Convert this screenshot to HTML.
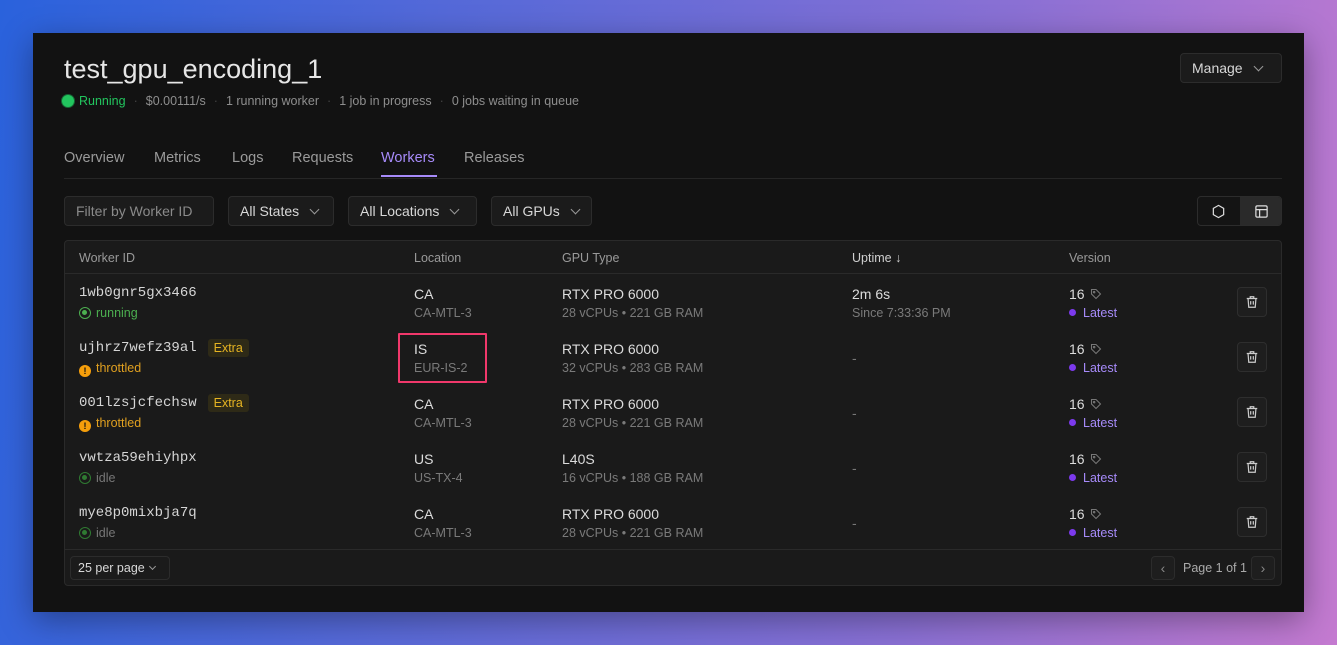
<!DOCTYPE html>
<html><head><meta charset="utf-8"><style>
*{box-sizing:border-box;margin:0;padding:0}
body{width:1337px;height:645px;overflow:hidden;background:linear-gradient(100deg,#2a62dc 0%,#5a6ad8 35%,#8a70d4 70%,#c47ad0 100%);font-family:"Liberation Sans",sans-serif;position:relative}
.panel{position:absolute;left:33px;top:33px;width:1271px;height:579px;background:#121212;box-shadow:0 8px 30px rgba(0,0,0,.35)}
.abs{position:absolute}
h1{position:absolute;left:31px;top:21px;font-size:27px;font-weight:400;color:#e6e6e6}
.meta{position:absolute;left:29px;top:61px;font-size:12.5px;color:#8e8e8e;display:flex;align-items:center;white-space:nowrap}
.meta .sep{color:#444;margin:0 8px}
.dot{width:12px;height:12px;border-radius:50%;background:#22c55e;display:inline-block;margin-right:5px;box-shadow:0 0 0 1px #166534}
.btn{position:absolute;border:1px solid #2c2c2c;background:#1b1b1b;border-radius:4px;color:#d8d8d8;font-size:14px;display:flex;align-items:center;padding-left:11px}
.chev{width:7px;height:7px;border-right:1.3px solid #999;border-bottom:1.3px solid #999;transform:rotate(45deg);margin-left:12px;margin-top:-4px}
.tabs{position:absolute;left:31px;top:117px;font-size:14.5px;color:#9a9a9a}
.tabs span{position:absolute;white-space:nowrap}
.tline{position:absolute;left:31px;top:145px;width:1218px;height:1px;background:#262626}
.table{position:absolute;left:31px;top:207px;width:1218px;height:346px;background:#1a1a1a;border:1px solid #2a2a2a;border-radius:4px}
.hd{position:absolute;top:0;height:33px;left:0;right:0;border-bottom:1px solid #2a2a2a;font-size:12.5px;color:#9a9a9a}
.hd span{position:absolute;top:10px}
.row{position:absolute;left:0;right:0;height:55px}
.c{position:absolute;white-space:nowrap}
.t1{top:11px;font-size:14px;color:#dcdcdc}
.t2{top:31px;font-size:12.5px;color:#7a7a7a}
.mono{font-family:"Liberation Mono",monospace;font-size:14px;color:#d6d6d6;display:flex;align-items:center;height:18px;top:9px}
.extra{display:inline-block;background:#2e2a17;color:#e6b422;font-family:"Liberation Sans",sans-serif;font-size:12.5px;padding:2px 6px;border-radius:3px;margin-left:11px}
.del{position:absolute;right:14px;top:12px;width:30px;height:30px;border:1px solid #2e2e2e;background:#1e1e1e;border-radius:4px;display:flex;align-items:center;justify-content:center}
.lat{color:#a78bfa}
.lat:before{content:"";display:inline-block;width:7px;height:7px;border-radius:50%;background:#7c3aed;margin-right:7px;vertical-align:1px}
.ft{position:absolute;left:0;right:0;top:308px;border-top:1px solid #2a2a2a;height:37px}
.tag{vertical-align:-1px;margin-left:2px}
</style></head><body>
<div class="panel">
<h1>test_gpu_encoding_1</h1>
<div class="meta"><span class="dot"></span><span style="color:#22c55e">Running</span><span class="sep">·</span>$0.00111/s<span class="sep">·</span>1 running worker<span class="sep">·</span>1 job in progress<span class="sep">·</span>0 jobs waiting in queue</div>
<div class="btn" style="left:1147px;top:20px;width:102px;height:30px">Manage<span class="chev"></span></div>
<div class="tabs"><span style="left:0">Overview</span><span style="left:90px">Metrics</span><span style="left:168px">Logs</span><span style="left:228px">Requests</span><span style="left:317px;color:#a78bfa">Workers</span><span style="left:400px">Releases</span></div>
<div class="abs" style="left:348px;top:142px;width:56px;height:2px;background:#a78bfa"></div>
<div class="tline"></div>
<div class="btn" style="left:31px;top:163px;width:150px;height:30px;color:#8a8a8a">Filter by Worker ID</div>
<div class="btn" style="left:195px;top:163px;width:106px;height:30px">All States<span class="chev"></span></div>
<div class="btn" style="left:315px;top:163px;width:129px;height:30px">All Locations<span class="chev"></span></div>
<div class="btn" style="left:458px;top:163px;width:101px;height:30px">All GPUs<span class="chev"></span></div>
<div class="abs" style="left:1164px;top:163px;width:85px;height:30px;border:1px solid #2c2c2c;border-radius:4px;background:#141414;overflow:hidden">
<div class="abs" style="left:42px;top:0;width:43px;height:30px;background:#2a2a2a"></div>
<svg class="abs" style="left:13px;top:7px" width="15" height="15" viewBox="0 0 16 16" fill="none" stroke="#ddd" stroke-width="1.3"><path d="M8 1.5l5.5 3.2v6.6L8 14.5l-5.5-3.2V4.7z"/></svg>
<svg class="abs" style="left:56px;top:7px" width="15" height="15" viewBox="0 0 16 16" fill="none" stroke="#ddd" stroke-width="1.3"><rect x="2" y="2" width="12" height="12" rx="1.5"/><path d="M2 6h12M6 6v8"/></svg>
</div>
<div class="table">
<div class="hd"><span style="left:14px">Worker ID</span><span style="left:349px">Location</span><span style="left:497px">GPU Type</span><span style="left:787px;color:#cfcfcf">Uptime ↓</span><span style="left:1004px">Version</span></div>
<div class="row" style="top:34px">
<div class="c mono" style="left:14px">1wb0gnr5gx3466</div>
<div class="c t2" style="left:14px;color:#4caf50"><span style="display:inline-block;width:12px;height:12px;border:1.5px solid #4caf50;border-radius:50%;vertical-align:-2px;margin-right:5px;position:relative"><span style="position:absolute;left:2px;top:2px;width:5px;height:5px;border-radius:50%;background:#4caf50"></span></span>running</div>
<div class="c t1" style="left:349px">CA</div><div class="c t2" style="left:349px">CA-MTL-3</div>
<div class="c t1" style="left:497px">RTX PRO 6000</div><div class="c t2" style="left:497px">28 vCPUs • 221 GB RAM</div>
<div class="c t1" style="left:787px">2m 6s</div><div class="c t2" style="left:787px">Since 7:33:36 PM</div>
<div class="c t1" style="left:1004px">16 <svg class="tag" width="12" height="12" viewBox="0 0 16 16" fill="none" stroke="#777" stroke-width="1.4"><path d="M2 2h6l6 6-6 6-6-6z"/><circle cx="5.5" cy="5.5" r="1"/></svg></div><div class="c t2 lat" style="left:1004px">Latest</div>
<div class="del"><svg width="14" height="14" viewBox="0 0 16 16" fill="none" stroke="#ccc" stroke-width="1.4"><path d="M2 4h12M6 4V2h4v2M3.5 4l.8 10h7.4l.8-10M6.5 7v4M9.5 7v4"/></svg></div>
</div>
<div class="row" style="top:89px">
<div class="c mono" style="left:14px">ujhrz7wefz39al<span class="extra">Extra</span></div>
<div class="c t2" style="left:14px;color:#e0a020"><span style="display:inline-block;width:12px;height:12px;background:#f59e0b;border-radius:50%;vertical-align:-2px;margin-right:5px;color:#111;font-size:9px;text-align:center;line-height:12px;font-weight:bold">!</span>throttled</div>
<div class="c t1" style="left:349px">IS</div><div class="c t2" style="left:349px">EUR-IS-2</div>
<div class="abs" style="left:333px;top:3px;width:89px;height:50px;border:2.5px solid #f0386b;border-radius:1px"></div>
<div class="c t1" style="left:497px">RTX PRO 6000</div><div class="c t2" style="left:497px">32 vCPUs • 283 GB RAM</div>
<div class="c t1" style="left:787px;top:20px;color:#777">-</div>
<div class="c t1" style="left:1004px">16 <svg class="tag" width="12" height="12" viewBox="0 0 16 16" fill="none" stroke="#777" stroke-width="1.4"><path d="M2 2h6l6 6-6 6-6-6z"/><circle cx="5.5" cy="5.5" r="1"/></svg></div><div class="c t2 lat" style="left:1004px">Latest</div>
<div class="del"><svg width="14" height="14" viewBox="0 0 16 16" fill="none" stroke="#ccc" stroke-width="1.4"><path d="M2 4h12M6 4V2h4v2M3.5 4l.8 10h7.4l.8-10M6.5 7v4M9.5 7v4"/></svg></div>
</div>
<div class="row" style="top:144px">
<div class="c mono" style="left:14px">001lzsjcfechsw<span class="extra">Extra</span></div>
<div class="c t2" style="left:14px;color:#e0a020"><span style="display:inline-block;width:12px;height:12px;background:#f59e0b;border-radius:50%;vertical-align:-2px;margin-right:5px;color:#111;font-size:9px;text-align:center;line-height:12px;font-weight:bold">!</span>throttled</div>
<div class="c t1" style="left:349px">CA</div><div class="c t2" style="left:349px">CA-MTL-3</div>
<div class="c t1" style="left:497px">RTX PRO 6000</div><div class="c t2" style="left:497px">28 vCPUs • 221 GB RAM</div>
<div class="c t1" style="left:787px;top:20px;color:#777">-</div>
<div class="c t1" style="left:1004px">16 <svg class="tag" width="12" height="12" viewBox="0 0 16 16" fill="none" stroke="#777" stroke-width="1.4"><path d="M2 2h6l6 6-6 6-6-6z"/><circle cx="5.5" cy="5.5" r="1"/></svg></div><div class="c t2 lat" style="left:1004px">Latest</div>
<div class="del"><svg width="14" height="14" viewBox="0 0 16 16" fill="none" stroke="#ccc" stroke-width="1.4"><path d="M2 4h12M6 4V2h4v2M3.5 4l.8 10h7.4l.8-10M6.5 7v4M9.5 7v4"/></svg></div>
</div>
<div class="row" style="top:199px">
<div class="c mono" style="left:14px">vwtza59ehiyhpx</div>
<div class="c t2" style="left:14px;color:#777"><span style="display:inline-block;width:12px;height:12px;border:1.5px solid #2f7a32;border-radius:50%;vertical-align:-2px;margin-right:5px;position:relative"><span style="position:absolute;left:2px;top:2px;width:5px;height:5px;border-radius:50%;background:#2f7a32"></span></span>idle</div>
<div class="c t1" style="left:349px">US</div><div class="c t2" style="left:349px">US-TX-4</div>
<div class="c t1" style="left:497px">L40S</div><div class="c t2" style="left:497px">16 vCPUs • 188 GB RAM</div>
<div class="c t1" style="left:787px;top:20px;color:#777">-</div>
<div class="c t1" style="left:1004px">16 <svg class="tag" width="12" height="12" viewBox="0 0 16 16" fill="none" stroke="#777" stroke-width="1.4"><path d="M2 2h6l6 6-6 6-6-6z"/><circle cx="5.5" cy="5.5" r="1"/></svg></div><div class="c t2 lat" style="left:1004px">Latest</div>
<div class="del"><svg width="14" height="14" viewBox="0 0 16 16" fill="none" stroke="#ccc" stroke-width="1.4"><path d="M2 4h12M6 4V2h4v2M3.5 4l.8 10h7.4l.8-10M6.5 7v4M9.5 7v4"/></svg></div>
</div>
<div class="row" style="top:254px">
<div class="c mono" style="left:14px">mye8p0mixbja7q</div>
<div class="c t2" style="left:14px;color:#777"><span style="display:inline-block;width:12px;height:12px;border:1.5px solid #2f7a32;border-radius:50%;vertical-align:-2px;margin-right:5px;position:relative"><span style="position:absolute;left:2px;top:2px;width:5px;height:5px;border-radius:50%;background:#2f7a32"></span></span>idle</div>
<div class="c t1" style="left:349px">CA</div><div class="c t2" style="left:349px">CA-MTL-3</div>
<div class="c t1" style="left:497px">RTX PRO 6000</div><div class="c t2" style="left:497px">28 vCPUs • 221 GB RAM</div>
<div class="c t1" style="left:787px;top:20px;color:#777">-</div>
<div class="c t1" style="left:1004px">16 <svg class="tag" width="12" height="12" viewBox="0 0 16 16" fill="none" stroke="#777" stroke-width="1.4"><path d="M2 2h6l6 6-6 6-6-6z"/><circle cx="5.5" cy="5.5" r="1"/></svg></div><div class="c t2 lat" style="left:1004px">Latest</div>
<div class="del"><svg width="14" height="14" viewBox="0 0 16 16" fill="none" stroke="#ccc" stroke-width="1.4"><path d="M2 4h12M6 4V2h4v2M3.5 4l.8 10h7.4l.8-10M6.5 7v4M9.5 7v4"/></svg></div>
</div>
<div class="ft">
<div class="btn" style="left:5px;top:6px;width:100px;height:24px;font-size:12.5px;padding-left:7px">25 per page<span class="chev" style="margin-left:5px;width:5px;height:5px"></span></div>
<div class="btn" style="left:1086px;top:6px;width:24px;height:24px;justify-content:center;padding:0;color:#888;background:#1e1e1e">‹</div>
<div class="abs" style="left:1118px;top:11px;font-size:12.5px;color:#aaa">Page 1 of 1</div>
<div class="btn" style="left:1186px;top:6px;width:24px;height:24px;justify-content:center;padding:0;color:#888;background:#1e1e1e">›</div>
</div>
</div>
</div>
</body></html>
